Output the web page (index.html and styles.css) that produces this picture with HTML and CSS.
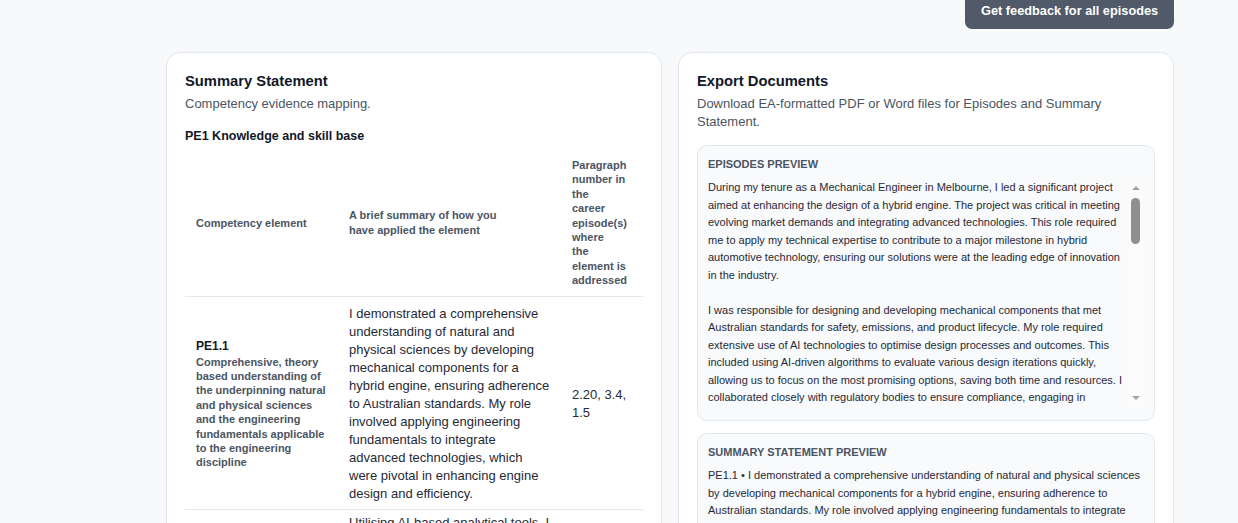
FILE: index.html
```html
<!DOCTYPE html>
<html lang="en">
<head>
  <meta charset="UTF-8" />
  <meta name="viewport" content="width=device-width, initial-scale=1.0" />
  <title>Summary Statement - Export</title>
  <link rel="stylesheet" href="styles.css">
</head>
<body>
  <div class="page">
    <div class="toolbar">
      <button class="btn-dark">Get feedback for all episodes</button>
    </div>

    <div class="grid">
      <section class="card">
        <h2>Summary Statement</h2>
        <p class="sub">Competency evidence mapping.</p>
        <h3 class="group">PE1 Knowledge and skill base</h3>

        <table class="map">
          <colgroup>
            <col class="c1" />
            <col class="c2" />
            <col class="c3" />
          </colgroup>
          <thead>
            <tr>
              <th>Competency element</th>
              <th><span class="narrow">A brief summary of how you have applied the element</span></th>
              <th>Paragraph<br>number in<br>the<br>career<br>episode(s)<br>where<br>the<br>element is<br>addressed</th>
            </tr>
          </thead>
          <tbody>
            <tr>
              <td class="elem">
                <div class="code">PE1.1</div>
                <div class="desc">Comprehensive, theory based understanding of the underpinning natural and physical sciences and the engineering fundamentals applicable to the engineering discipline</div>
              </td>
              <td>I demonstrated a comprehensive understanding of natural and physical sciences by developing mechanical components for a hybrid engine, ensuring adherence to Australian standards. My role involved applying engineering fundamentals to integrate advanced technologies, which were pivotal in enhancing engine design and efficiency.</td>
              <td>2.20, 3.4, 1.5</td>
            </tr>
            <tr>
              <td class="elem">
                <div class="code">PE1.2</div>
                <div class="desc">Conceptual understanding of the mathematics, numerical analysis, statistics, and computer and information sciences</div>
              </td>
              <td class="top">Utilising AI-based analytical tools, I applied numerical analysis and statistical methods to evaluate design iterations for the hybrid engine. These tools allowed me to model component behaviour under varying load conditions, identify the most promising options early, and reduce development time while maintaining compliance with Australian standards.</td>
              <td>2.22, 3.6</td>
            </tr>
          </tbody>
        </table>
      </section>

      <section class="card">
        <h2>Export Documents</h2>
        <p class="sub">Download EA-formatted PDF or Word files for Episodes and Summary Statement.</p>

        <div class="preview">
          <div class="label">Episodes preview</div>
          <div class="scroll-wrap">
            <div class="scroll">
              <p>During my tenure as a Mechanical Engineer in Melbourne, I led a significant project aimed at enhancing the design of a hybrid engine. The project was critical in meeting evolving market demands and integrating advanced technologies. This role required me to apply my technical expertise to contribute to a major milestone in hybrid automotive technology, ensuring our solutions were at the leading edge of innovation in the industry.</p>
              <p>I was responsible for designing and developing mechanical components that met Australian standards for safety, emissions, and product lifecycle. My role required extensive use of AI technologies to optimise design processes and outcomes. This included using AI-driven algorithms to evaluate various design iterations quickly, allowing us to focus on the most promising options, saving both time and resources. I collaborated closely with regulatory bodies to ensure compliance, engaging in comprehensive reviews and technical discussions throughout the design cycle.</p>
              <p>The engineering team consisted of design engineers, simulation specialists, test technicians and a project manager. I reported directly to the engineering manager and coordinated with suppliers to confirm material specifications, tolerances and delivery schedules for prototype parts.</p>
            </div>
            <div class="sbar">
              <span class="arrow up"></span>
              <span class="track"><span class="thumb"></span></span>
              <span class="arrow down"></span>
            </div>
          </div>
        </div>

        <div class="preview second">
          <div class="label">Summary statement preview</div>
          <div class="plain">
            <p>PE1.1 &bull; I demonstrated a comprehensive understanding of natural and physical sciences by developing mechanical components for a hybrid engine, ensuring adherence to Australian standards. My role involved applying engineering fundamentals to integrate advanced technologies, which were pivotal in enhancing engine design and efficiency.</p>
          </div>
        </div>
      </section>
    </div>
  </div>
</body>
</html>
```

FILE: styles.css
```css
body {
  margin: 0;
  padding: 0;
  background-color: #f8f9fb;
  font-family: "Liberation Sans", Arial, sans-serif;
  color: #1f2937;
}
.page {
  padding: 0 64px 0 166px;
}
.toolbar {
  display: flex;
  justify-content: flex-end;
  margin-top: -10px;
  margin-bottom: 23px;
}
.btn-dark {
  font-family: inherit;
  background-color: #515a68;
  color: #fff;
  border: none;
  border-radius: 0 0 7px 7px;
  padding: 12px 16px 10px;
  font-size: 12.75px;
  font-weight: 700;
  height: 39px;
  width: 209px;
  white-space: nowrap;
}
.grid {
  display: grid;
  grid-template-columns: 1fr 1fr;
  gap: 16px;
  align-items: start;
}
.card {
  background-color: #fff;
  border: 1px solid #e3e7ee;
  border-radius: 14px;
  padding: 18px 18px 20px;
  box-shadow: 0 1px 2px rgba(15, 23, 42, 0.04);
}
.card h2 {
  margin: 0;
  font-size: 14.75px;
  font-weight: 700;
  color: #111827;
  line-height: 20px;
}
.sub {
  margin: 4px 0 0;
  font-size: 13px;
  line-height: 18px;
  color: #4b5563;
}
.group {
  margin: 14px 0 4px;
  font-size: 12.5px;
  font-weight: 700;
  line-height: 18px;
  color: #111827;
}
.map {
  width: 100%;
  border-collapse: collapse;
  table-layout: fixed;
}
.map col.c1 { width: 153px; }
.map col.c2 { width: 223px; }
.map th {
  text-align: left;
  font-size: 11px;
  font-weight: 700;
  line-height: 14.4px;
  color: #4b5563;
  padding: 9px 11px 8px;
  border-bottom: 1px solid #e3e7ee;
  vertical-align: middle;
}
.narrow {
  display: block;
  max-width: 150px;
}
.map td {
  font-size: 13px;
  line-height: 18px;
  color: #1f2937;
  padding: 8px 11px 6px;
  border-bottom: 1px solid #e3e7ee;
  vertical-align: middle;
}
.map td.top {
  padding-top: 4px;
}
.code {
  font-size: 12px;
  font-weight: 700;
  color: #111827;
  line-height: 17px;
}
.desc {
  font-size: 11px;
  font-weight: 700;
  line-height: 14.4px;
  color: #4b5563;
}
.preview {
  background-color: #f8fafc;
  border: 1px solid #e2e8f0;
  border-radius: 10px;
  padding: 11px 11px 13px 10px;
  margin-top: 14px;
}
.preview.second {
  margin-top: 12px;
}
.label {
  font-size: 11px;
  font-weight: 700;
  text-transform: uppercase;
  color: #4b5563;
  line-height: 14px;
  margin-bottom: 8px;
}
.scroll-wrap {
  display: flex;
  height: 228px;
}
.scroll {
  flex: 1;
  overflow: hidden;
}
.scroll p, .plain p {
  margin: 0 0 17.5px;
  font-size: 11px;
  line-height: 17.5px;
  color: #1f2937;
}
.sbar {
  width: 15px;
  display: flex;
  flex-direction: column;
  align-items: center;
  background-color: #fbfbfc;
}
.arrow {
  width: 0;
  height: 0;
  border-left: 4px solid transparent;
  border-right: 4px solid transparent;
  margin: 7px 0;
}
.arrow.up {
  border-bottom: 4px solid #a3a3a3;
}
.arrow.down {
  border-top: 4px solid #a3a3a3;
}
.track {
  flex: 1;
  width: 100%;
  display: flex;
  justify-content: center;
}
.thumb {
  width: 9px;
  height: 46px;
  margin-top: 1px;
  border-radius: 5px;
  background-color: #8f8f8f;
}
```
